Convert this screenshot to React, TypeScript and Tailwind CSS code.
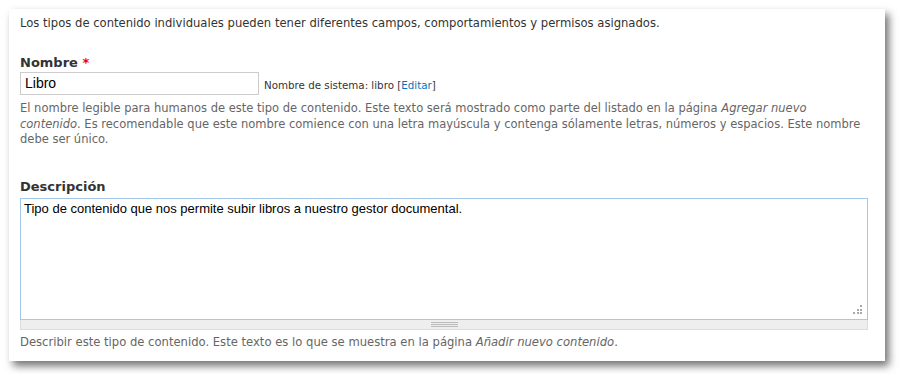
import React from "react";

export default function App() {
  const sans = { fontFamily: '"DejaVu Sans", Verdana, sans-serif' };
  return (
    <div className="w-[899px] h-[374px] bg-white pl-[9px] pt-[9px]">
      <div
        className="w-[876px] h-[352px] bg-white shadow-[4px_5px_8px_rgba(0,0,0,0.55)] pl-[11px] pr-[17px] pt-[6px] text-[#333]"
        style={sans}
      >
        <p className="text-[11.6px] leading-[16px] text-[#333]">
          Los tipos de contenido individuales pueden tener diferentes campos, comportamientos y permisos asignados.
        </p>
        <div className="mt-[24px]">
          <label className="block font-bold text-[13px] leading-[16px] text-[#333]">
            Nombre <span className="text-[#e00]">*</span>
          </label>
          <div className="flex items-center mt-[1px]">
            <div
              className="w-[239px] h-[23px] border border-[#ccc] px-[4px] text-[14px] leading-[21px] text-black"
              style={{ fontFamily: '"Liberation Sans", Arial, sans-serif' }}
            >
              Libro
            </div>
            <span className="ml-[5px] mt-[2px] text-[10.3px] leading-[14px] text-[#333]">
              Nombre de sistema: libro [<span className="text-[#0074bd]">Editar</span>]
            </span>
          </div>
          <p className="mt-[6px] w-[860px] text-[11.5px] leading-[15.5px] text-[#666]">
            El nombre legible para humanos de este tipo de contenido. Este texto será mostrado como parte del listado en la página <em>Agregar nuevo</em>
            <br />
            <em>contenido</em>. Es recomendable que este nombre comience con una letra mayúscula y contenga sólamente letras, números y espacios. Este nombre
            <br />
            debe ser único.
          </p>
        </div>
        <div className="mt-[31px]">
          <label className="block font-bold text-[13px] leading-[16px] text-[#333]">Descripción</label>
          <div className="mt-[3px] w-[848px]">
            <div className="relative h-[122px] border border-[#a5c8e8] px-[3px] pt-[2px]">
              <div
                className="text-[13px] leading-[16px] text-black"
                style={{ fontFamily: '"Liberation Sans", Arial, sans-serif' }}
              >
                Tipo de contenido que nos permite subir libros a nuestro gestor documental.
              </div>
              <svg className="absolute right-[4px] bottom-[4px]" width="10" height="10" viewBox="0 0 10 10">
                <rect x="7" y="0" width="2" height="2" fill="#aaa" />
                <rect x="4" y="4" width="2" height="2" fill="#aaa" />
                <rect x="7" y="4" width="2" height="2" fill="#aaa" />
                <rect x="0" y="7" width="2" height="2" fill="#aaa" />
                <rect x="4" y="7" width="2" height="2" fill="#aaa" />
                <rect x="7" y="7" width="2" height="2" fill="#aaa" />
              </svg>
            </div>
            <div className="h-[10px] bg-[#eee] border border-t-0 border-[#ddd] flex flex-col items-center justify-center gap-[1px]">
              <div className="w-[27px] h-px bg-[#bbb]" />
              <div className="w-[27px] h-px bg-[#bbb]" />
              <div className="w-[27px] h-px bg-[#bbb]" />
            </div>
          </div>
          <p className="mt-[5px] text-[11.6px] leading-[15.5px] text-[#666]">
            Describir este tipo de contenido. Este texto es lo que se muestra en la página <em>Añadir nuevo contenido</em>.
          </p>
        </div>
      </div>
    </div>
  );
}
